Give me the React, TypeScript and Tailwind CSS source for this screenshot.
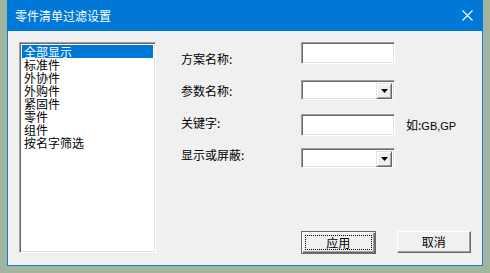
import React from "react";

const font = { fontFamily: '"Noto Sans CJK SC", "Liberation Sans", sans-serif' };

function TextBox() {
  return (
    <div className="w-[94px] h-[22px] bg-white border border-t-[#a0a0a0] border-l-[#a0a0a0] border-b-white border-r-white shadow-[inset_1px_1px_0_#696969,inset_-1px_-1px_0_#e3e3e3]" />
  );
}

function Combo() {
  return (
    <div className="w-[94px] h-[20px] bg-white border border-t-[#a0a0a0] border-l-[#a0a0a0] border-b-white border-r-white shadow-[inset_1px_1px_0_#696969,inset_-1px_-1px_0_#e3e3e3] flex justify-end items-start p-[2px]">
      <div className="w-[16px] h-[16px] bg-[#f0f0f0] border border-t-[#e3e3e3] border-l-[#e3e3e3] border-b-[#696969] border-r-[#696969] shadow-[inset_1px_1px_0_#ffffff,inset_-1px_-1px_0_#a0a0a0] flex items-center justify-center">
        <svg width="7" height="4" viewBox="0 0 7 4">
          <polygon points="0,0 7,0 3.5,4" fill="#000" />
        </svg>
      </div>
    </div>
  );
}

const items = ["全部显示", "标准件", "外协件", "外购件", "紧固件", "零件", "组件", "按名字筛选"];

export default function App() {
  return (
    <div className="w-[490px] h-[273px] bg-[#a1b4a0] pl-[7px] overflow-hidden" style={font}>
      <div className="w-[476px] h-[266px] bg-[#f0f0f0] border-x border-b border-[#1a7cd1] flex flex-col">
        <div className="h-[31px] bg-[#0078d7] flex items-center justify-between pl-[8px] pr-[10px] -mx-px">
          <span className="text-white text-[12px] leading-[14px]">零件清单过滤设置</span>
          <svg width="11" height="11" viewBox="0 0 11 11">
            <path d="M0.5 0.5 L10.5 10.5 M10.5 0.5 L0.5 10.5" stroke="#fff" strokeWidth="1.1" />
          </svg>
        </div>
        <div className="flex pl-[11px] pt-[11px]">
          <div className="w-[137px] h-[211px] bg-white border border-t-[#a0a0a0] border-l-[#a0a0a0] border-b-white border-r-white shadow-[inset_1px_1px_0_#696969,inset_-1px_-1px_0_#e3e3e3] p-[2px]">
            {items.map((t, i) => (
              <div
                key={t}
                className={
                  i === 0
                    ? "h-[13px] leading-[13px] text-[12px] bg-[#0078d7] text-white pl-[2px] whitespace-nowrap"
                    : "h-[13px] leading-[13px] text-[12px] text-black pl-[2px] whitespace-nowrap"
                }
              >
                {t}
              </div>
            ))}
          </div>
          <div className="ml-[25px] flex flex-col w-[290px]">
            <div className="flex items-start h-[22px]">
              <div className="w-[120px] text-[12px] leading-[14px] text-black mt-[10px]">方案名称:</div>
              <TextBox />
            </div>
            <div className="flex items-start h-[20px] mt-[16px]">
              <div className="w-[120px] text-[12px] leading-[14px] text-black mt-[4px]">参数名称:</div>
              <Combo />
            </div>
            <div className="flex items-start h-[22px] mt-[14px]">
              <div className="w-[120px] text-[12px] leading-[14px] text-black mt-[2px]">关键字:</div>
              <TextBox />
              <div className="ml-[11px] text-[12px] leading-[14px] text-black mt-[4px] whitespace-nowrap">
                如:<span className="text-[11px]" style={{ fontFamily: '"Liberation Sans", sans-serif' }}>GB,GP</span>
              </div>
            </div>
            <div className="flex items-start h-[20px] mt-[12px]">
              <div className="w-[120px] text-[12px] leading-[14px] text-black mt-[0px]">显示或屏蔽:</div>
              <Combo />
            </div>
            <div className="flex mt-[63px] ml-[120px] gap-[21px]">
              <div className="w-[75px] h-[23px] bg-[#f0f0f0] border border-[#696969] shadow-[inset_1px_1px_0_#ffffff,inset_-1px_-1px_0_#696969,inset_-2px_-2px_0_#a0a0a0] p-[3px]">
                <div className="w-full h-full border border-dotted border-black flex items-center justify-center text-[12px] leading-[14px] text-black">
                  应用
                </div>
              </div>
              <div className="w-[75px] h-[22px] bg-[#f0f0f0] border border-t-white border-l-white border-b-[#696969] border-r-[#696969] shadow-[inset_-1px_-1px_0_#a0a0a0] flex items-center justify-center text-[12px] leading-[14px] text-black">
                取消
              </div>
            </div>
          </div>
        </div>
      </div>
    </div>
  );
}
